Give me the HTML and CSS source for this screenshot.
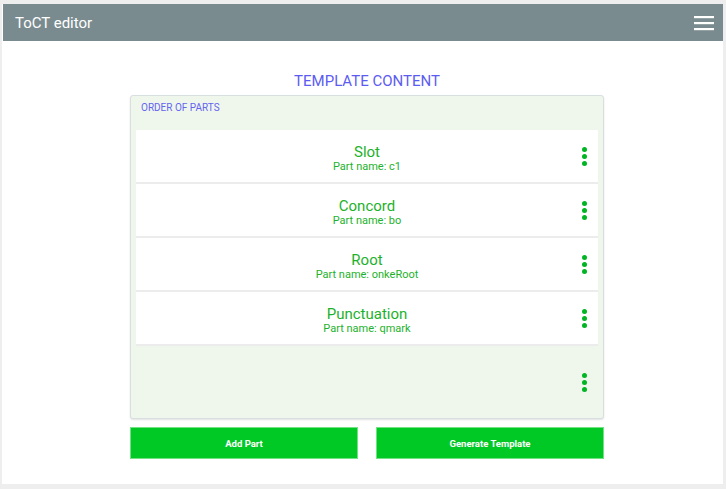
FILE: index.html
```html
<!DOCTYPE html>
<html lang="en">
<head>
    <meta charset="UTF-8">
    <meta name="viewport" content="width=device-width, initial-scale=1.0">
    <title>ToCT editor</title>
    <link rel="stylesheet" href="styles.css">
</head>
<body>
    <div class="page">
        <header class="topbar">
            <span class="app-title">ToCT editor</span>
            <span class="menu-btn">
                <svg width="22" height="16" viewBox="0 0 22 16">
                    <rect x="1" y="1" width="20" height="2.2" fill="#fff"/>
                    <rect x="1" y="7" width="20" height="2.2" fill="#fff"/>
                    <rect x="1" y="13" width="20" height="2.2" fill="#fff"/>
                </svg>
            </span>
        </header>

        <main class="content">
            <h2 class="section-title">TEMPLATE CONTENT</h2>
            <div class="panel">
                <div class="panel-label">ORDER OF PARTS</div>
                <div class="parts">
                    <div class="part">
                        <div class="part-text">
                            <div class="part-type">Slot</div>
                            <div class="part-name">Part name: c1</div>
                        </div>
                        <span class="kebab"><i></i><i></i><i></i></span>
                    </div>
                    <div class="part">
                        <div class="part-text">
                            <div class="part-type">Concord</div>
                            <div class="part-name">Part name: bo</div>
                        </div>
                        <span class="kebab"><i></i><i></i><i></i></span>
                    </div>
                    <div class="part">
                        <div class="part-text">
                            <div class="part-type">Root</div>
                            <div class="part-name">Part name: onkeRoot</div>
                        </div>
                        <span class="kebab"><i></i><i></i><i></i></span>
                    </div>
                    <div class="part">
                        <div class="part-text">
                            <div class="part-type">Punctuation</div>
                            <div class="part-name">Part name: qmark</div>
                        </div>
                        <span class="kebab"><i></i><i></i><i></i></span>
                    </div>
                </div>
                <div class="panel-foot">
                    <span class="kebab"><i></i><i></i><i></i></span>
                </div>
            </div>
            <div class="actions">
                <button type="button">Add Part</button>
                <button type="button">Generate Template</button>
            </div>
        </main>
    </div>
</body>
</html>
```

FILE: styles.css
```css
body {
    margin: 0;
    background-color: #eeeeee;
    font-family: Roboto, "Liberation Sans", sans-serif;
}
.page {
    margin: 4px 3px 0 2px;
    height: 480px;
    background-color: white;
}
.topbar {
    margin-left: 1px;
    height: 37px;
    background-color: #7a8b90;
    display: flex;
    align-items: center;
    justify-content: space-between;
    padding: 0 8px 0 12px;
}
.app-title {
    color: white;
    font-size: 15px;
}
.menu-btn {
    display: flex;
}
.content {
    width: 474px;
    margin: 0 auto;
    padding-left: 9px;
}
.section-title {
    margin: 32px 0 5px;
    text-align: center;
    font-size: 15px;
    font-weight: normal;
    line-height: 17px;
    color: #5c5cf3;
}
.panel {
    background-color: #eff7ed;
    border: 1px solid #d7dfe0;
    border-radius: 3px;
    box-shadow: 0 1px 2px rgba(0,0,0,0.12);
}
.panel-label {
    font-size: 10px;
    color: #6464f0;
    padding: 6px 10px 0;
    height: 28px;
}
.parts {
    margin: 0 5px;
}
.part {
    display: grid;
    grid-template-columns: 28px 1fr 28px;
    align-items: center;
    height: 52px;
    background-color: white;
    border-bottom: 2px solid #ececec;
    color: #1db22b;
    text-align: center;
}
.part-text {
    grid-column: 2;
    padding-top: 4px;
}
.part-type {
    font-size: 15px;
    line-height: 17px;
}
.part-name {
    font-size: 11px;
    line-height: 12px;
}
.kebab {
    grid-column: 3;
    display: flex;
    flex-direction: column;
    align-items: center;
    gap: 2px;
}
.kebab i {
    width: 5px;
    height: 5px;
    border-radius: 50%;
    background-color: #00b523;
}
.panel-foot {
    display: grid;
    grid-template-columns: 28px 1fr 28px;
    align-items: center;
    height: 72px;
    margin: 0 5px;
}
.actions {
    display: flex;
    gap: 18px;
    margin-top: 8px;
}
.actions button {
    flex: 1;
    height: 32px;
    background-color: #00c926;
    border: 1px solid #72e283;
    color: white;
    font-family: Roboto, "Liberation Sans", sans-serif;
    font-size: 9.5px;
    font-weight: bold;
    cursor: pointer;
}
```
